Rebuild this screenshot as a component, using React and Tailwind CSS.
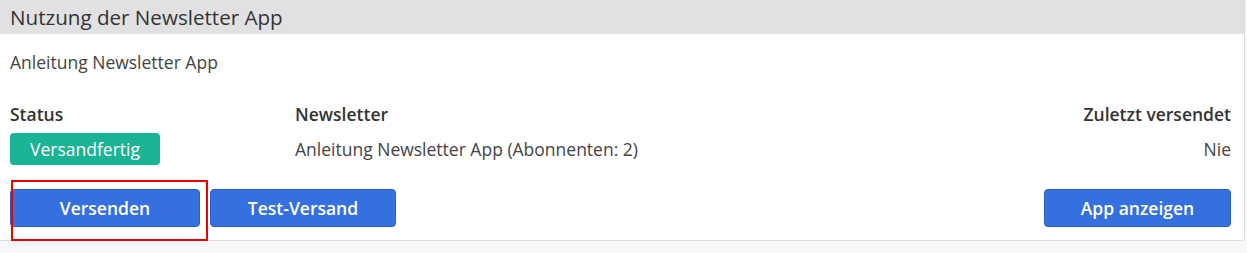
export default function App() {
    return (
        <div className="relative min-h-[253px] bg-[#f7f7f9] font-['Open_Sans',sans-serif] text-[#333]">
            <div className="bg-white border-r border-b border-[#dcdcdc] rounded-br-[4px] mr-[2px]">
                <div className="h-[34px] bg-[#e1e1e4] px-[10px] flex items-center">
                    <h2 className="text-[20.6px] font-[500] text-[#333] leading-[28px]">Nutzung der Newsletter App</h2>
                </div>
                <div className="pl-[10px] pr-[13px] pb-[13px] text-[17.5px]">
                    <p className="text-[#444] mt-[16px] leading-[24px]">Anleitung Newsletter App</p>

                    <div className="flex items-center mt-[28px] h-[24px] font-semibold">
                        <div className="w-[285px]">Status</div>
                        <div className="flex-1">Newsletter</div>
                        <div className="text-right">Zuletzt versendet</div>
                    </div>
                    <div className="flex items-center mt-[7px] h-[32px] text-[#444]">
                        <div className="w-[285px]">
                            <span className="inline-flex items-center justify-center w-[150px] h-[32px] rounded-[4px] bg-[#1ab394] text-white">Versandfertig</span>
                        </div>
                        <div className="flex-1">Anleitung Newsletter App (Abonnenten: 2)</div>
                        <div className="text-right">Nie</div>
                    </div>

                    <div className="flex items-center mt-[24px]">
                        <div className="flex gap-[10px]">
                            <button className="w-[190px] h-[38px] rounded-[4px] bg-[#3570e0] border border-[#2c5fc9] text-white font-semibold">Versenden</button>
                            <button className="w-[186px] h-[38px] rounded-[4px] bg-[#3570e0] border border-[#2c5fc9] text-white font-semibold">Test-Versand</button>
                        </div>
                        <button className="ml-auto w-[187px] h-[38px] rounded-[4px] bg-[#3570e0] border border-[#2c5fc9] text-white font-semibold">App anzeigen</button>
                    </div>
                </div>
            </div>
            <div className="absolute left-[11px] top-[180px] w-[197px] h-[61px] border-2 border-[#ee0000] pointer-events-none"></div>
        </div>
    );
}
